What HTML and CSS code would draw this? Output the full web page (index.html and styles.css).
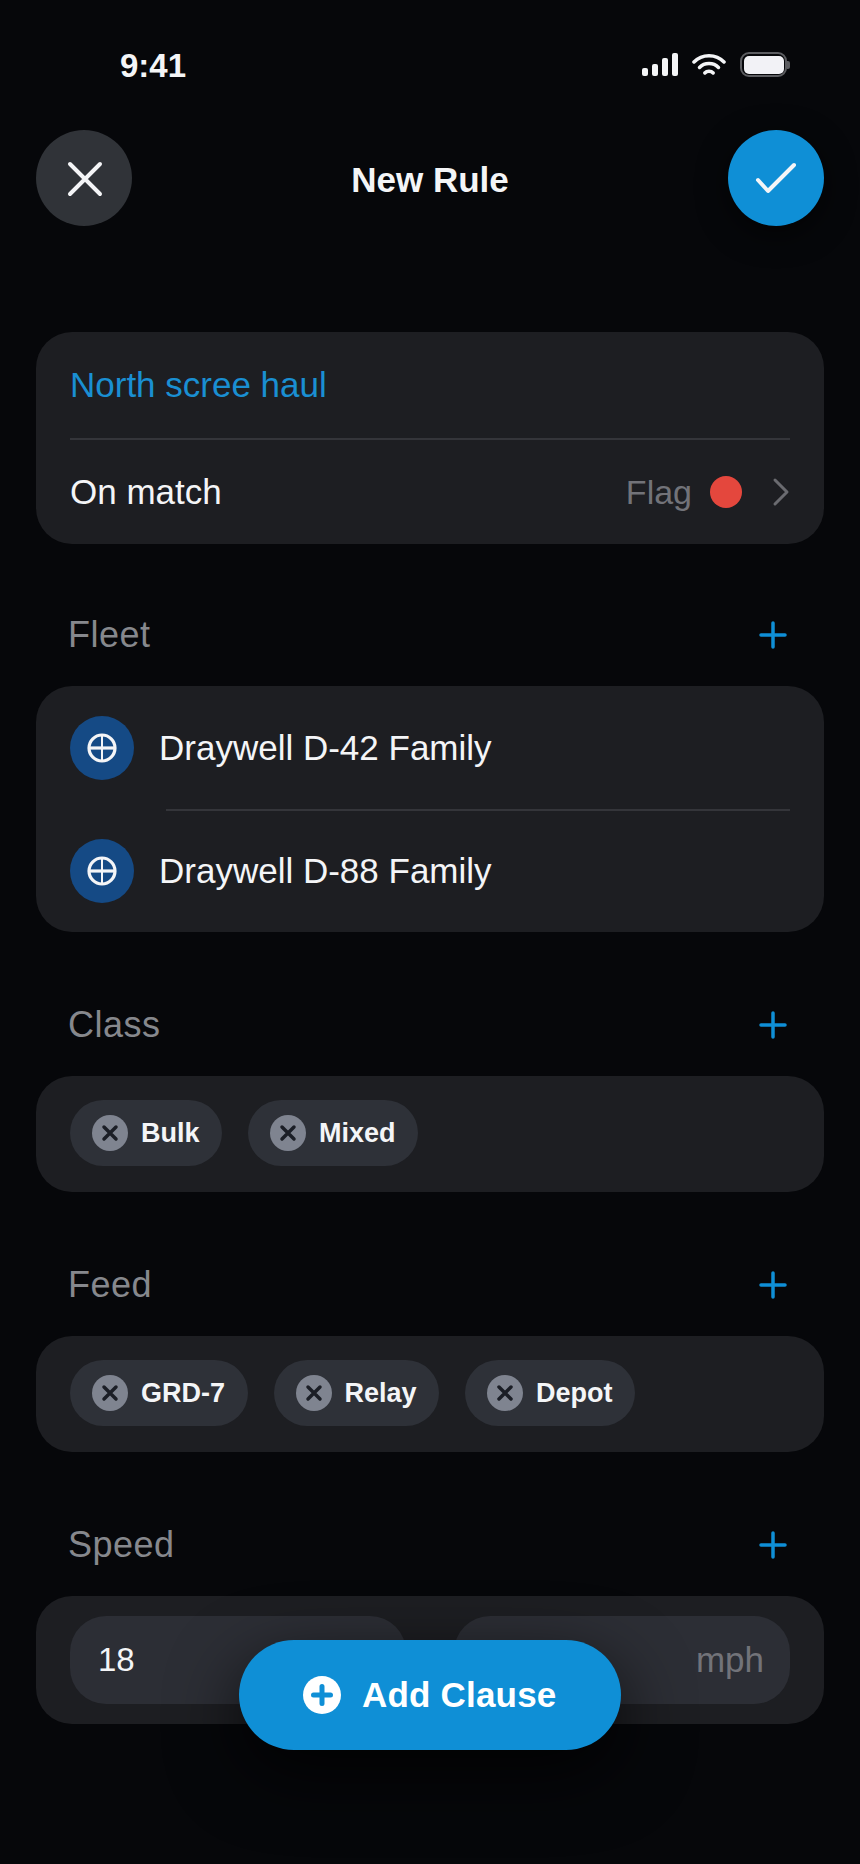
FILE: index.html
```html
<!DOCTYPE html>
<html lang="en">
<head>
  <meta charset="UTF-8">
  <title>New Rule</title>
  <link rel="stylesheet" href="styles.css">
</head>
<body>
  <div class="screen">

    <div class="status-bar">
      <span class="time">9:41</span>
      <div class="status-icons">
        <svg class="icon-signal" width="36" height="24" viewBox="0 0 36 24">
          <rect x="0" y="15" width="6" height="8" rx="2"/>
          <rect x="10" y="11" width="6" height="12" rx="2"/>
          <rect x="20" y="5" width="6" height="18" rx="2"/>
          <rect x="30" y="0" width="6" height="23" rx="2"/>
        </svg>
        <svg class="icon-wifi" width="34" height="24" viewBox="0 0 34 24">
          <path d="M2 9C10 0.500 24 0.500 32 9"/>
          <path d="M7.500 14.500C12.500 9.300 21.500 9.300 26.500 14.500"/>
          <path d="M12.800 20C15 17.500 19 17.500 21.200 20"/>
        </svg>
        <div class="battery">
          <div class="battery-body"><div class="battery-fill"></div></div>
          <div class="battery-nub"></div>
        </div>
      </div>
    </div>

    <header class="top-bar">
      <button class="round-btn btn-close">
        <svg width="96" height="96" viewBox="0 0 96 96"><path d="M34 34L64 64M64 34L34 64"/></svg>
      </button>
      <h1>New Rule</h1>
      <button class="round-btn btn-confirm">
        <svg width="96" height="96" viewBox="0 0 96 96"><path d="M30 50L40 61L66 35"/></svg>
      </button>
    </header>

    <div class="card rule-card">
      <div class="rule-row rule-name">North scree haul</div>
      <div class="rule-row rule-action">
        <span>On match</span>
        <div class="rule-value">
          <span class="flag-label">Flag</span>
          <span class="flag-dot"></span>
          <svg class="chevron" width="18" height="30" viewBox="0 0 18 30"><path d="M3 3L15 15L3 27"/></svg>
        </div>
      </div>
    </div>

    <section class="group">
      <div class="group-head">
        <span>Fleet</span>
        <svg class="plus" width="30" height="30" viewBox="0 0 30 30"><path d="M15 3V27M3 15H27"/></svg>
      </div>
      <div class="card fleet-card">
        <div class="fleet-row">
          <span class="fleet-icon">
            <svg width="32" height="32" viewBox="0 0 32 32"><circle cx="16" cy="16" r="13"/><path d="M3 16H29"/><path class="thin" d="M16 3V29"/></svg>
          </span>
          <span>Draywell D-42 Family</span>
        </div>
        <div class="fleet-row">
          <span class="fleet-icon">
            <svg width="32" height="32" viewBox="0 0 32 32"><circle cx="16" cy="16" r="13"/><path d="M3 16H29"/><path class="thin" d="M16 3V29"/></svg>
          </span>
          <span>Draywell D-88 Family</span>
        </div>
      </div>
    </section>

    <section class="group">
      <div class="group-head">
        <span>Class</span>
        <svg class="plus" width="30" height="30" viewBox="0 0 30 30"><path d="M15 3V27M3 15H27"/></svg>
      </div>
      <div class="card chip-card">
        <div class="chip">
          <svg width="36" height="36" viewBox="0 0 36 36"><circle cx="18" cy="18" r="18"/><path d="M12 12L24 24M24 12L12 24"/></svg>
          <span>Bulk</span>
        </div>
        <div class="chip">
          <svg width="36" height="36" viewBox="0 0 36 36"><circle cx="18" cy="18" r="18"/><path d="M12 12L24 24M24 12L12 24"/></svg>
          <span>Mixed</span>
        </div>
      </div>
    </section>

    <section class="group">
      <div class="group-head">
        <span>Feed</span>
        <svg class="plus" width="30" height="30" viewBox="0 0 30 30"><path d="M15 3V27M3 15H27"/></svg>
      </div>
      <div class="card chip-card">
        <div class="chip">
          <svg width="36" height="36" viewBox="0 0 36 36"><circle cx="18" cy="18" r="18"/><path d="M12 12L24 24M24 12L12 24"/></svg>
          <span>GRD-7</span>
        </div>
        <div class="chip">
          <svg width="36" height="36" viewBox="0 0 36 36"><circle cx="18" cy="18" r="18"/><path d="M12 12L24 24M24 12L12 24"/></svg>
          <span>Relay</span>
        </div>
        <div class="chip">
          <svg width="36" height="36" viewBox="0 0 36 36"><circle cx="18" cy="18" r="18"/><path d="M12 12L24 24M24 12L12 24"/></svg>
          <span>Depot</span>
        </div>
      </div>
    </section>

    <section class="group">
      <div class="group-head">
        <span>Speed</span>
        <svg class="plus" width="30" height="30" viewBox="0 0 30 30"><path d="M15 3V27M3 15H27"/></svg>
      </div>
      <div class="card speed-card">
        <div class="speed-field">18</div>
        <div class="speed-field speed-unit">mph</div>
      </div>
    </section>

    <button class="add-clause">
      <svg width="38" height="38" viewBox="0 0 38 38"><circle cx="19" cy="19" r="19"/><path d="M19 10.500V27.500M10.500 19H27.500"/></svg>
      <span>Add Clause</span>
    </button>

  </div>
</body>
</html>
```

FILE: styles.css
```css
* {
  box-sizing: border-box;
}

body {
  margin: 0;
  background-color: #06070a;
  color: #f4f5f7;
  font-family: "Liberation Sans", Arial, sans-serif;
}

.screen {
  position: relative;
  width: 860px;
  height: 1864px;
  padding: 0 36px;
  overflow: hidden;
}

/* Status bar */
.status-bar {
  display: flex;
  justify-content: space-between;
  align-items: center;
  height: 50px;
  margin-top: 40px;
  padding: 2px 34px 0 84px;
}

.time {
  font-size: 33px;
  font-weight: bold;
}

.status-icons {
  display: flex;
  align-items: center;
  gap: 14px;
  margin-bottom: 3px;
}

.icon-signal {
  fill: #f4f5f7;
}

.icon-wifi {
  fill: none;
  stroke: #f4f5f7;
  stroke-width: 3.5;
  stroke-linecap: round;
}

.battery {
  display: flex;
  align-items: center;
}

.battery-body {
  width: 47px;
  height: 25px;
  padding: 1.500px;
  border: 2.500px solid #5c5d61;
  border-radius: 9px;
}

.battery-fill {
  height: 100%;
  background: #f2f2f6;
  border-radius: 5px;
}

.battery-nub {
  width: 3px;
  height: 8px;
  background: #5c5d61;
  border-radius: 0 2px 2px 0;
}

/* Top bar */
.top-bar {
  display: flex;
  justify-content: space-between;
  align-items: center;
  margin-top: 40px;
  margin-bottom: 106px;
}

.top-bar h1 {
  margin: 0;
  padding-top: 3px;
  font-size: 35px;
  font-weight: bold;
}

.round-btn {
  width: 96px;
  height: 96px;
  padding: 0;
  border: none;
  border-radius: 50%;
}

.round-btn svg {
  display: block;
  fill: none;
  stroke: #f4f5f7;
  stroke-width: 4;
  stroke-linecap: round;
  stroke-linejoin: round;
}

.btn-close {
  background: #303338;
}

.btn-confirm {
  background: #0f8fd6;
  box-shadow: 0 8px 30px rgba(0,0,0,0.6);
}

/* Cards */
.card {
  background: #1d1e22;
  border-radius: 36px;
}

.rule-card {
  height: 212px;
  margin-bottom: 66px;
  padding: 0 34px;
}

.rule-row {
  display: flex;
  align-items: center;
  font-size: 35px;
}

.rule-name {
  height: 108px;
  color: #1a8fd2;
  border-bottom: 2px solid #34353a;
}

.rule-action {
  justify-content: space-between;
  height: 104px;
}

.rule-value {
  display: flex;
  align-items: center;
}

.flag-label {
  font-size: 34px;
  color: #727379;
}

.flag-dot {
  width: 32px;
  height: 32px;
  margin-left: 18px;
  background: #e4473d;
  border-radius: 50%;
}

.chevron {
  margin-left: 30px;
  fill: none;
  stroke: #6a6b70;
  stroke-width: 3;
  stroke-linecap: round;
  stroke-linejoin: round;
}

/* Groups */
.group {
  margin-bottom: 68px;
}

.group-head {
  display: flex;
  justify-content: space-between;
  align-items: center;
  height: 48px;
  margin-bottom: 28px;
  padding: 1px 36px 0 32px;
  font-size: 36px;
  letter-spacing: 0.5px;
  color: #86888d;
}

.plus {
  fill: none;
  stroke: #0f8fd6;
  stroke-width: 3.5;
  stroke-linecap: round;
}

.fleet-card {
  height: 246px;
  padding: 0 34px 2px;
}

.fleet-row {
  display: flex;
  align-items: center;
  gap: 25px;
  height: 119px;
  font-size: 35px;
}

.fleet-row:first-child {
  height: 125px;
  padding-bottom: 2px;
  background: linear-gradient(#34353a, #34353a) no-repeat 96px 100% / 100% 2px;
}

.fleet-icon {
  display: flex;
  justify-content: center;
  align-items: center;
  flex-shrink: 0;
  width: 64px;
  height: 64px;
  background: #154a85;
  border-radius: 50%;
}

.fleet-icon svg {
  fill: none;
  stroke: #f4f5f7;
  stroke-width: 3.2;
}

.fleet-icon svg .thin {
  stroke-width: 2;
}

.chip-card {
  display: flex;
  align-items: center;
  gap: 26px;
  height: 116px;
  padding: 0 34px 2px;
}

.chip {
  display: flex;
  align-items: center;
  gap: 13px;
  height: 66px;
  padding: 1px 22.500px 0 22px;
  background: #2e3138;
  border-radius: 33px;
  font-size: 27px;
  font-weight: bold;
}

.chip svg {
  margin-top: -1px;
  fill: #7f8490;
}

.chip svg path {
  fill: none;
  stroke: #1b1e26;
  stroke-width: 3.5;
  stroke-linecap: round;
}

.speed-card {
  display: flex;
  gap: 48px;
  height: 128px;
  padding: 20px 34px;
}

.speed-field {
  display: flex;
  align-items: center;
  flex: 1;
  height: 88px;
  padding: 0 26px 0 28px;
  background: #2c2e35;
  border-radius: 36px;
  font-size: 33px;
}

.speed-unit {
  justify-content: flex-end;
  font-size: 35px;
  color: #727379;
}

/* Floating button */
.add-clause {
  position: absolute;
  left: 239px;
  bottom: 114px;
  display: flex;
  align-items: center;
  gap: 21px;
  width: 382px;
  height: 110px;
  padding: 0 0 0 64px;
  border: none;
  border-radius: 55px;
  background: #0f8fd6;
  color: #fff;
  font-family: inherit;
  font-size: 35px;
  font-weight: bold;
  letter-spacing: 0.2px;
  box-shadow: 0 24px 70px rgba(0,0,0,0.75);
}

.add-clause svg {
  fill: #fff;
}

.add-clause svg path {
  fill: none;
  stroke: #0f8fd6;
  stroke-width: 5;
  stroke-linecap: round;
}
```
